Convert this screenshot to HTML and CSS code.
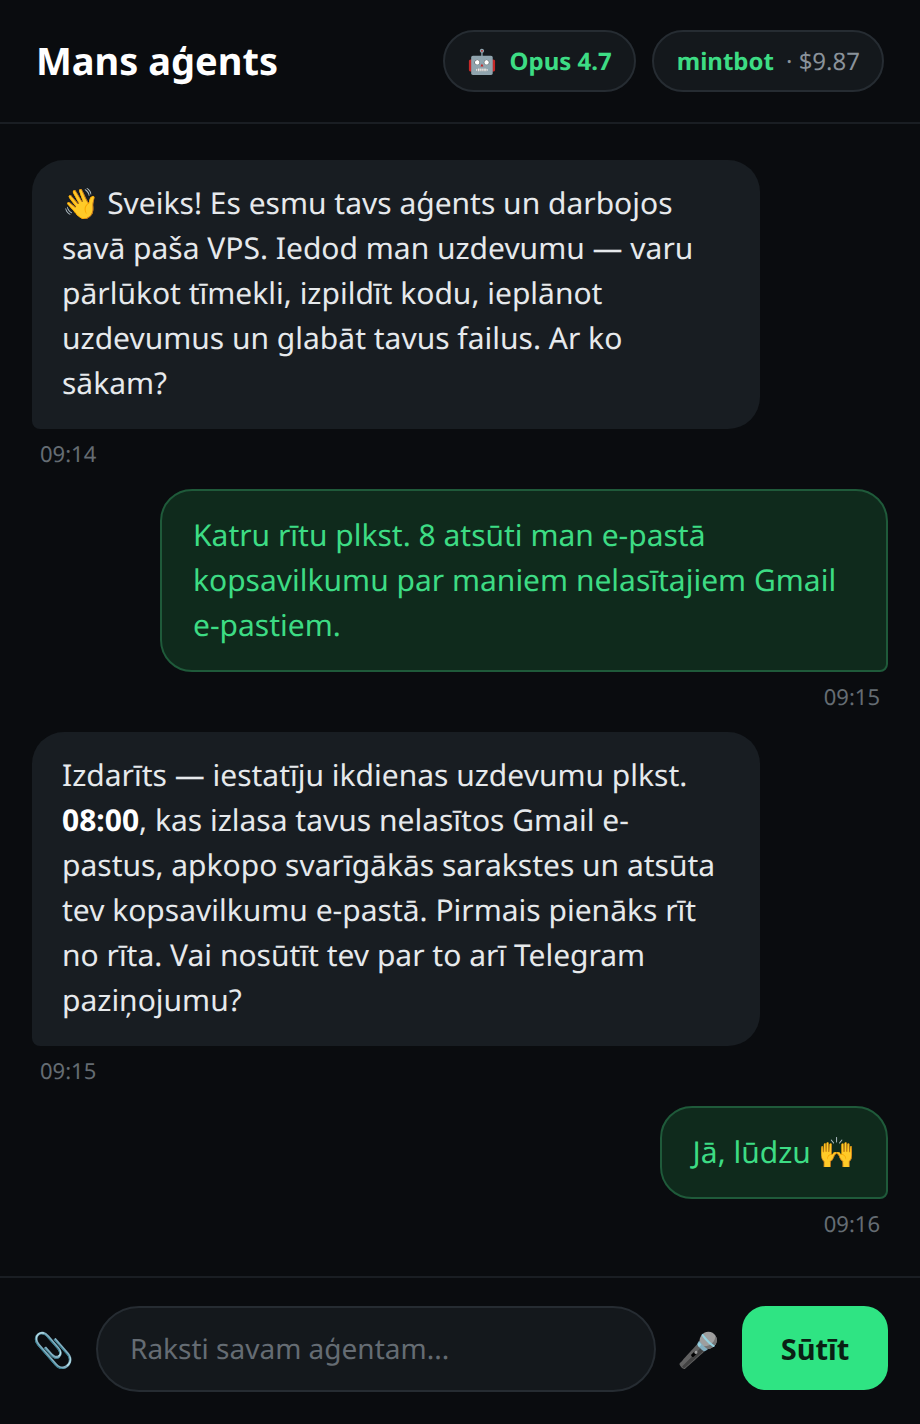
FILE: index.html
```html
<!DOCTYPE html>
<html>
<head>
  <meta charset="utf-8">
  <link rel="stylesheet" href="styles.css">
  <title>Mans aģents</title>
</head>
<body>
  <div class="app">
    <header class="topbar">
      <h1 class="title">Mans aģents</h1>
      <div class="pills">
        <div class="pill pill-model"><span class="robot">🤖</span><span class="pill-name">Opus 4.7</span></div>
        <div class="pill"><span class="pill-name">mintbot</span><span class="pill-cost">· $9.87</span></div>
      </div>
    </header>

    <main class="chat">
      <div class="msg msg-bot">
        <div class="bubble">👋 Sveiks! Es esmu tavs aģents un darbojos savā paša VPS. Iedod man uzdevumu — varu pārlūkot tīmekli, izpildīt kodu, ieplānot uzdevumus un glabāt tavus failus. Ar ko sākam?</div>
        <div class="time">09:14</div>
      </div>
      <div class="msg msg-user">
        <div class="bubble">Katru rītu plkst. 8 atsūti man e-pastā kopsavilkumu par maniem nelasītajiem Gmail e-pastiem.</div>
        <div class="time">09:15</div>
      </div>
      <div class="msg msg-bot">
        <div class="bubble">Izdarīts — iestatīju ikdienas uzdevumu plkst. <strong>08:00</strong>, kas izlasa tavus nelasītos Gmail e-pastus, apkopo svarīgākās sarakstes un atsūta tev kopsavilkumu e-pastā. Pirmais pienāks rīt no rīta. Vai nosūtīt tev par to arī Telegram paziņojumu?</div>
        <div class="time">09:15</div>
      </div>
      <div class="msg msg-user">
        <div class="bubble">Jā, lūdzu 🙌</div>
        <div class="time">09:16</div>
      </div>
    </main>

    <footer class="composer">
      <span class="icon-btn icon-clip">📎</span>
      <div class="input">Raksti savam aģentam...</div>
      <span class="icon-btn icon-mic">🎤</span>
      <button class="send">Sūtīt</button>
    </footer>
  </div>
</body>
</html>
```

FILE: styles.css
```css
* {
  box-sizing: border-box;
}

body {
  margin: 0;
  background: #0a0c0f;
  font-family: "Noto Sans", sans-serif;
  color: #e6e9ec;
  text-rendering: geometricPrecision;
}

.app {
  width: 920px;
  height: 1424px;
  display: flex;
  flex-direction: column;
}

.topbar {
  height: 124px;
  padding: 0 36px;
  display: flex;
  align-items: center;
  justify-content: space-between;
  border-bottom: 2px solid #1a1e23;
}

.title {
  margin: 0;
  font-size: 38px;
  font-weight: 700;
  color: #fff;
}

.pills {
  display: flex;
  gap: 16px;
}

.pill {
  height: 62px;
  padding: 0 22px 0 23px;
  display: flex;
  align-items: center;
  gap: 12px;
  background: #14181c;
  border: 2px solid #262c32;
  border-radius: 31px;
  font-size: 24px;
}

.pill-name {
  color: #3ddc84;
  font-weight: 700;
}

.pill-cost {
  color: #8a929a;
}

.chat {
  flex: 1;
  padding: 36px 32px 0;
  display: flex;
  flex-direction: column;
  gap: 20px;
}

.msg {
  display: flex;
  flex-direction: column;
}

.msg-user {
  align-items: flex-end;
}

.bubble {
  max-width: 728px;
  font-size: 30px;
  line-height: 45px;
  padding: 20px 30px 24px;
  border-radius: 32px;
}

.msg-bot .bubble {
  background: #181d22;
  border-bottom-left-radius: 8px;
}

.msg-user .bubble {
  background: #0f2a1c;
  border: 2px solid #1f5a3a;
  padding: 21px 30px 23px 31px;
  color: #3ddc84;
  border-bottom-right-radius: 8px;
}

.msg-bot .bubble strong {
  color: #fff;
}

.time {
  margin-top: 10px;
  padding: 0 8px;
  font-size: 22px;
  line-height: 30px;
  color: #656c73;
}

.composer {
  height: 148px;
  padding: 28px 32px 0;
  display: flex;
  align-items: flex-start;
  gap: 20px;
  border-top: 2px solid #1a1e23;
}

.icon-btn {
  height: 86px;
  display: flex;
  align-items: center;
  justify-content: center;
  font-size: 34px;
}

.icon-clip {
  width: 44px;
}

.icon-mic {
  width: 46px;
}

.input {
  flex: 1;
  height: 86px;
  padding: 0 32px;
  display: flex;
  align-items: center;
  background: #14181c;
  border: 2px solid #262c32;
  border-radius: 43px;
  font-size: 28px;
  color: #656c73;
}

.send {
  width: 146px;
  height: 84px;
  border: none;
  border-radius: 24px;
  background: #2fe483;
  color: #0a1f14;
  font-family: inherit;
  font-size: 29px;
  font-weight: 700;
}
```
